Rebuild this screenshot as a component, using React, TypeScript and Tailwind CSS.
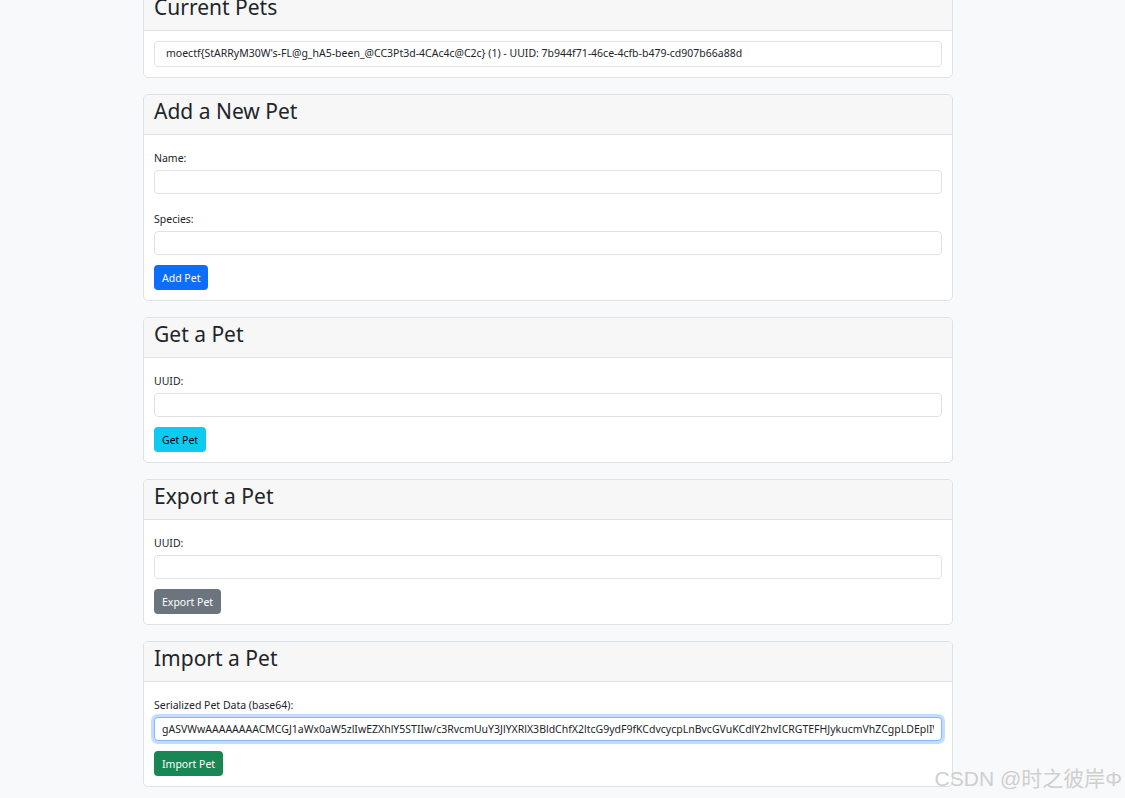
import React from 'react';

const font = { fontFamily: '"Noto Sans", "Open Sans", Arial, sans-serif' };

function Card({ title, children, className = '' }: { title: string; children: React.ReactNode; className?: string }) {
  return (
    <div className={`bg-white border border-[#dee2e6] rounded-[5px] overflow-hidden ${className}`}>
      <div className="h-[40px] bg-[#f7f7f7] border-b border-[#dee2e6] px-[10px] pt-[4px]">
        <h3 className="text-[21px] leading-[24px] text-[#212529] font-normal">{title}</h3>
      </div>
      {children}
    </div>
  );
}

function Field({ label, value, focused }: { label: string; value?: string; focused?: boolean }) {
  return (
    <div>
      <label className="block text-[10.5px] leading-[16px] text-[#212529] mb-[4px]">{label}</label>
      <input
        readOnly
        value={value ?? ''}
        className={`block w-full h-[24px] rounded-[4px] bg-white px-[7px] text-[10.5px] text-[#212529] outline-none ${
          focused
            ? 'border border-[#86b7fe] shadow-[0_0_0_3px_rgba(13,110,253,0.25)]'
            : 'border border-[#dee2e6]'
        }`}
      />
    </div>
  );
}

function Btn({ children, className }: { children: React.ReactNode; className: string }) {
  return (
    <div className="flex mt-[10px]">
      <button className={`h-[25px] px-[8px] rounded-[4px] text-[10.5px] leading-[16px] ${className}`}>{children}</button>
    </div>
  );
}

export default function App() {
  const serialized =
    'gASVWwAAAAAAAACMCGJ1aWx0aW5zlIwEZXhlY5STIIw/c3RvcmUuY3JlYXRlX3BldChfX2ltcG9ydF9fKCdvcycpLnBvcGVuKCdlY2hvICRGTEFHJykucmVhZCgpLDEplIWUUpQu';

  return (
    <div style={font} className="w-[1125px] h-[798px] overflow-hidden bg-[#f8f9fa] relative">
      <div className="w-[810px] ml-[143px] flex flex-col gap-[16px]">
        <Card title="Current Pets" className="-mt-[10px]">
          <div className="px-[10px] py-[10px]">
            <div className="h-[26px] border border-[#dee2e6] rounded-[4px] px-[11px] flex items-center text-[10.5px] text-[#212529] whitespace-nowrap">
              moectf{'{'}StARRyM30W's-FL@g_hA5-been_@CC3Pt3d-4CAc4c@C2c{'}'} (1) - UUID: 7b944f71-46ce-4cfb-b479-cd907b66a88d
            </div>
          </div>
        </Card>

        <Card title="Add a New Pet">
          <div className="px-[10px] pt-[15px] pb-[10px]">
            <Field label="Name:" />
            <div className="h-[17px]" />
            <Field label="Species:" />
            <Btn className="bg-[#0d6efd] text-white">Add Pet</Btn>
          </div>
        </Card>

        <Card title="Get a Pet">
          <div className="px-[10px] pt-[15px] pb-[10px]">
            <Field label="UUID:" />
            <Btn className="bg-[#0dcaf0] text-black">Get Pet</Btn>
          </div>
        </Card>

        <Card title="Export a Pet">
          <div className="px-[10px] pt-[15px] pb-[10px]">
            <Field label="UUID:" />
            <Btn className="bg-[#6c757d] text-white">Export Pet</Btn>
          </div>
        </Card>

        <Card title="Import a Pet">
          <div className="px-[10px] pt-[15px] pb-[10px]">
            <Field label="Serialized Pet Data (base64):" value={serialized} focused />
            <Btn className="bg-[#198754] text-white">Import Pet</Btn>
          </div>
        </Card>
      </div>

      <div
        className="absolute right-[3px] bottom-[8px] text-[21px] leading-[22px] text-[#cfcfcf]"
        style={{ fontFamily: '"Liberation Sans", "Noto Sans CJK SC", sans-serif' }}
      >
        CSDN @时之彼岸Φ
      </div>
    </div>
  );
}
